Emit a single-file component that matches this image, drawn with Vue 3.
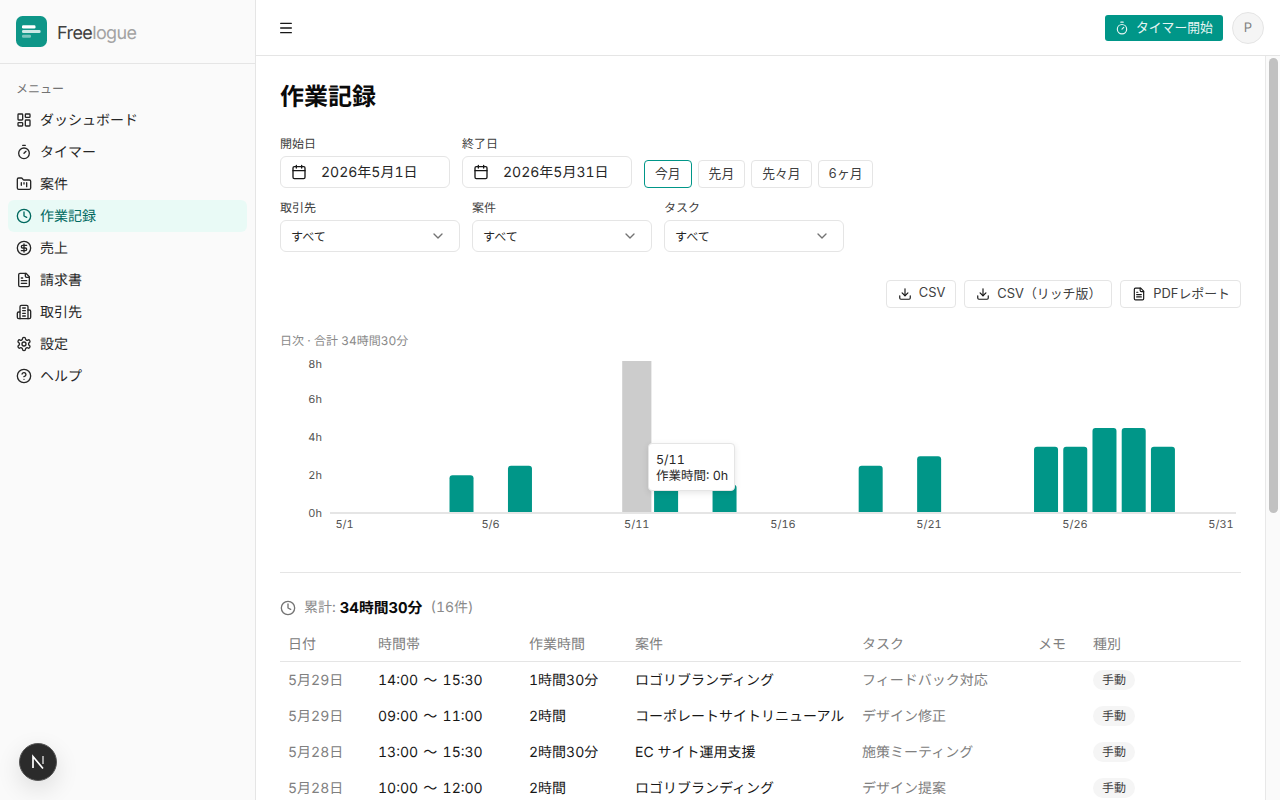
<script setup>
const nav = [
  { label: 'ダッシュボード', icon: 'dash' },
  { label: 'タイマー', icon: 'timer' },
  { label: '案件', icon: 'folder' },
  { label: '作業記録', icon: 'clock', active: true },
  { label: '売上', icon: 'dollar' },
  { label: '請求書', icon: 'file' },
  { label: '取引先', icon: 'building' },
  { label: '設定', icon: 'gear' },
  { label: 'ヘルプ', icon: 'help' },
]
const ranges = ['今月', '先月', '先々月', '6ヶ月']
const selects = ['取引先', '案件', 'タスク']
const exportsList = [
  { label: 'CSV', icon: 'download' },
  { label: 'CSV（リッチ版）', icon: 'download' },
  { label: 'PDFレポート', icon: 'file' },
]
const slot = 906 / 31
const zeroY = 513
const perHour = 18.9
const hours = { 4: 2, 6: 2.5, 11: 3.5, 13: 1.5, 18: 2.5, 20: 3, 24: 3.5, 25: 3.5, 26: 4.5, 27: 4.5, 28: 3.5 }
const bars = Object.entries(hours).map(([i, h]) => ({
  x: 330 - 280 + slot * (Number(i) + 0.5) - 12,
  h: h * perHour,
}))
const barPath = (b) => {
  const top = zeroY - 356 - b.h
  const base = zeroY - 356
  return `M${b.x} ${base}V${top + 3}Q${b.x} ${top} ${b.x + 3} ${top}H${b.x + 21}Q${b.x + 24} ${top} ${b.x + 24} ${top + 3}V${base}Z`
}
const yTicks = [['8h', 8], ['6h', 43], ['4h', 81], ['2h', 119], ['0h', 157]]
const xTicks = [['5/1', 64.5], ['5/6', 210.5], ['5/11', 356.8], ['5/16', 503], ['5/21', 649], ['5/26', 795], ['5/31', 941]]
const rows = [
  ['5月29日', '14:00 〜 15:30', '1時間30分', 'ロゴリブランディング', 'フィードバック対応'],
  ['5月29日', '09:00 〜 11:00', '2時間', 'コーポレートサイトリニューアル', 'デザイン修正'],
  ['5月28日', '13:00 〜 15:30', '2時間30分', 'EC サイト運用支援', '施策ミーティング'],
  ['5月28日', '10:00 〜 12:00', '2時間', 'ロゴリブランディング', 'デザイン提案'],
]
</script>

<template>
  <div class="app">
    <aside class="sidebar">
      <div class="brand">
        <svg class="logo" viewBox="0 0 31 31" width="31" height="31">
          <rect width="31" height="31" rx="6.5" fill="#0e9688" />
          <rect x="6" y="9.3" width="13.5" height="3.2" rx="1.2" fill="#fff" />
          <rect x="6" y="14" width="18.6" height="3" rx="1.2" fill="#fff" fill-opacity=".78" />
          <rect x="6" y="18.7" width="9" height="3" rx="1.2" fill="#fff" fill-opacity=".45" />
        </svg>
        <span class="brand-name">Free<span class="brand-light">logue</span></span>
      </div>
      <nav class="nav">
        <div class="nav-title">メニュー</div>
        <a v-for="n in nav" :key="n.label" class="nav-item" :class="{ active: n.active }">
          <svg class="ico" viewBox="0 0 24 24" width="16" height="16">
            <g v-if="n.icon === 'dash'"><rect x="3" y="3" width="7" height="9" rx="1" /><rect x="14" y="3" width="7" height="5" rx="1" /><rect x="14" y="12" width="7" height="9" rx="1" /><rect x="3" y="16" width="7" height="5" rx="1" /></g>
            <g v-else-if="n.icon === 'timer'"><line x1="10" y1="2" x2="14" y2="2" /><line x1="12" y1="14" x2="15" y2="11" /><circle cx="12" cy="14" r="8" /></g>
            <g v-else-if="n.icon === 'folder'"><path d="M20 20a2 2 0 0 0 2-2V8a2 2 0 0 0-2-2h-7.9a2 2 0 0 1-1.69-.9L9.6 3.9A2 2 0 0 0 7.93 3H4a2 2 0 0 0-2 2v13a2 2 0 0 0 2 2Z" /><path d="M8 10v4M12 10v2M16 10v6" /></g>
            <g v-else-if="n.icon === 'clock'"><circle cx="12" cy="12" r="10" /><path d="M12 6v6l4 2" /></g>
            <g v-else-if="n.icon === 'dollar'"><circle cx="12" cy="12" r="10" /><path d="M16 8h-6a2 2 0 1 0 0 4h4a2 2 0 1 1 0 4H8" /><path d="M12 18V6" /></g>
            <g v-else-if="n.icon === 'file'"><path d="M15 2H6a2 2 0 0 0-2 2v16a2 2 0 0 0 2 2h12a2 2 0 0 0 2-2V7Z" /><path d="M14 2v4a2 2 0 0 0 2 2h4" /><path d="M10 9H8M16 13H8M16 17H8" /></g>
            <g v-else-if="n.icon === 'building'"><path d="M6 22V4a2 2 0 0 1 2-2h8a2 2 0 0 1 2 2v18Z" /><path d="M6 12H4a2 2 0 0 0-2 2v6a2 2 0 0 0 2 2h2" /><path d="M18 9h2a2 2 0 0 1 2 2v9a2 2 0 0 1-2 2h-2" /><path d="M10 6h4M10 10h4M10 14h4M10 18h4" /></g>
            <g v-else-if="n.icon === 'gear'"><path d="M12.22 2h-.44a2 2 0 0 0-2 2v.18a2 2 0 0 1-1 1.73l-.43.25a2 2 0 0 1-2 0l-.15-.08a2 2 0 0 0-2.73.73l-.22.38a2 2 0 0 0 .73 2.73l.15.1a2 2 0 0 1 1 1.72v.51a2 2 0 0 1-1 1.74l-.15.09a2 2 0 0 0-.73 2.73l.22.38a2 2 0 0 0 2.73.73l.15-.08a2 2 0 0 1 2 0l.43.25a2 2 0 0 1 1 1.73V20a2 2 0 0 0 2 2h.44a2 2 0 0 0 2-2v-.18a2 2 0 0 1 1-1.73l.43-.25a2 2 0 0 1 2 0l.15.08a2 2 0 0 0 2.73-.73l.22-.39a2 2 0 0 0-.73-2.73l-.15-.08a2 2 0 0 1-1-1.74v-.5a2 2 0 0 1 1-1.74l.15-.09a2 2 0 0 0 .73-2.73l-.22-.38a2 2 0 0 0-2.73-.73l-.15.08a2 2 0 0 1-2 0l-.43-.25a2 2 0 0 1-1-1.73V4a2 2 0 0 0-2-2Z" /><circle cx="12" cy="12" r="3" /></g>
            <g v-else-if="n.icon === 'help'"><circle cx="12" cy="12" r="10" /><path d="M9.09 9a3 3 0 0 1 5.83 1c0 2-3 3-3 3" /><path d="M12 17h.01" /></g>
          </svg>
          <span>{{ n.label }}</span>
        </a>
      </nav>
      <div class="next-badge">
        <svg viewBox="0 0 38 38" width="38" height="38">
          <circle cx="19" cy="19" r="18.5" fill="#2b2b2b" stroke="#555" />
          <path d="M14 25V13.5L24 25.5" fill="none" stroke="#fff" stroke-width="1.7" />
          <path d="M24 13V21" fill="none" stroke="#bbb" stroke-width="1.7" />
        </svg>
      </div>
    </aside>

    <div class="main">
      <header class="topbar">
        <svg class="ico menu" viewBox="0 0 24 24" width="16" height="16"><path d="M4 5h16M4 12h16M4 19h16" /></svg>
        <div class="top-right">
          <button class="timer-btn">
            <svg class="ico" viewBox="0 0 24 24" width="14" height="14"><line x1="10" y1="2" x2="14" y2="2" /><line x1="12" y1="14" x2="15" y2="11" /><circle cx="12" cy="14" r="8" /></svg>
            タイマー開始
          </button>
          <div class="avatar">P</div>
        </div>
      </header>

      <div class="body">
        <main class="content">
          <h1 class="title">作業記録</h1>

          <div class="filters">
            <div class="filter-row">
              <label class="field">
                <span class="field-label">開始日</span>
                <div class="input date"><svg class="ico" viewBox="0 0 24 24" width="16" height="16"><path d="M8 2v4M16 2v4" /><rect x="3" y="4" width="18" height="18" rx="2" /><path d="M3 10h18" /></svg><span>2026年5月1日</span></div>
              </label>
              <label class="field">
                <span class="field-label">終了日</span>
                <div class="input date"><svg class="ico" viewBox="0 0 24 24" width="16" height="16"><path d="M8 2v4M16 2v4" /><rect x="3" y="4" width="18" height="18" rx="2" /><path d="M3 10h18" /></svg><span>2026年5月31日</span></div>
              </label>
              <div class="ranges">
                <button v-for="(r, i) in ranges" :key="r" class="range" :class="{ on: i === 0 }">{{ r }}</button>
              </div>
            </div>
            <div class="filter-row">
              <label v-for="s in selects" :key="s" class="field">
                <span class="field-label">{{ s }}</span>
                <div class="input select"><span>すべて</span><svg class="ico chev" viewBox="0 0 24 24" width="16" height="16"><path d="m6 9 6 6 6-6" /></svg></div>
              </label>
            </div>
          </div>

          <div class="exports">
            <button v-for="e in exportsList" :key="e.label" class="export">
              <svg class="ico" viewBox="0 0 24 24" width="14" height="14">
                <g v-if="e.icon === 'download'"><path d="M12 15V3" /><path d="M21 15v4a2 2 0 0 1-2 2H5a2 2 0 0 1-2-2v-4" /><path d="m7 10 5 5 5-5" /></g>
                <g v-else><path d="M15 2H6a2 2 0 0 0-2 2v16a2 2 0 0 0 2 2h12a2 2 0 0 0 2-2V7Z" /><path d="M14 2v4a2 2 0 0 0 2 2h4" /><path d="M10 9H8M16 13H8M16 17H8" /></g>
              </svg>
              {{ e.label }}
            </button>
          </div>

          <div class="chart-title">日次 · 合計 34時間30分</div>
          <div class="chart">
            <svg class="chart-svg" viewBox="0 0 961 180" width="961" height="180">
              <rect x="342.2" y="5" width="29.2" height="152" fill="#ccc" />
              <path v-for="(b, i) in bars" :key="i" :d="barPath(b)" fill="#009688" />
              <line x1="50" y1="157" x2="956" y2="157" stroke="#e5e5e5" stroke-width="2" />
              <text v-for="t in yTicks" :key="t[0]" x="42" :y="t[1] + 4" text-anchor="end" class="tick">{{ t[0] }}</text>
              <text v-for="t in xTicks" :key="t[0]" :x="t[1]" y="172" text-anchor="middle" class="tick">{{ t[0] }}</text>
            </svg>
            <div class="tooltip">
              <div>5/11</div>
              <div>作業時間: 0h</div>
            </div>
          </div>

          <hr class="sep" />

          <div class="summary">
            <svg class="ico" viewBox="0 0 24 24" width="16" height="16"><circle cx="12" cy="12" r="10" /><path d="M12 6v6l4 2" /></svg>
            <span class="sum-label">累計:</span>
            <strong>34時間30分</strong>
            <span class="sum-count">(16件)</span>
          </div>

          <table class="table">
            <thead>
              <tr>
                <th class="c1">日付</th><th class="c2">時間帯</th><th class="c3">作業時間</th><th class="c4">案件</th><th class="c5">タスク</th><th class="c6">メモ</th><th class="c7">種別</th>
              </tr>
            </thead>
            <tbody>
              <tr v-for="(r, i) in rows" :key="i">
                <td class="muted">{{ r[0] }}</td>
                <td class="time">{{ r[1] }}</td>
                <td>{{ r[2] }}</td>
                <td>{{ r[3] }}</td>
                <td class="muted">{{ r[4] }}</td>
                <td></td>
                <td><span class="tag">手動</span></td>
              </tr>
            </tbody>
          </table>
        </main>
        <div class="scrollbar"><div class="thumb"></div></div>
      </div>
    </div>
  </div>
</template>

<style>
html, body { margin: 0; height: 100%; overflow: hidden; }
</style>

<style scoped>
.app {
  display: flex; width: 1280px; height: 800px; overflow: hidden; background: #fff; color: #0a0a0a;
  font-family: Inter, "Noto Sans CJK JP", sans-serif; font-size: 14px;
  font-variant-numeric: tabular-nums;
  text-rendering: geometricPrecision;
}
.ico { fill: none; stroke: currentColor; stroke-width: 2; stroke-linecap: round; stroke-linejoin: round; flex: none; }
.sidebar { position: relative; width: 256px; flex: none; box-sizing: border-box; background: #fafafa; border-right: 1px solid #e5e5e5; }
.brand { display: flex; align-items: center; gap: 10px; height: 64px; box-sizing: border-box; padding: 0 16px; border-bottom: 1px solid #e5e5e5; }
.brand-name { font-size: 18px; letter-spacing: -0.6px; color: #404040; padding-top: 3px; }
.brand-light { color: #a3a3a3; }
.nav { padding: 8px; }
.nav-title { height: 32px; padding: 1px 8px 0; box-sizing: border-box; line-height: 32px; font-size: 12px; color: #737373; }
.nav-item { display: flex; align-items: center; gap: 8px; height: 32px; padding: 0 8px; border-radius: 6px; color: #262626; }
.nav-item.active { background: #e9faf6; color: #00695f; }
.next-badge { position: absolute; left: 19px; top: 743px; width: 38px; height: 38px; border-radius: 50%; box-shadow: 0 8px 24px rgba(0,0,0,.12); }
.next-badge svg { display: block; }
.main { flex: 1; min-width: 0; display: flex; flex-direction: column; }
.topbar { height: 56px; flex: none; box-sizing: border-box; display: flex; align-items: center; justify-content: space-between; padding: 0 16px 0 22px; border-bottom: 1px solid #e5e5e5; }
.menu { color: #171717; }
.top-right { display: flex; align-items: center; gap: 9px; }
.timer-btn { display: flex; align-items: center; gap: 7px; height: 26px; width: 118px; box-sizing: border-box; padding: 0 0 2px 10px; border: 0; border-radius: 3px; background: #009688; color: #e6f5f3; font: inherit; font-size: 12.8px; }
.timer-btn .ico { margin-top: 2px; }
.avatar { width: 32px; height: 32px; box-sizing: border-box; border-radius: 50%; background: #f5f5f5; border: 1px solid #e5e5e5; color: #808080; display: flex; align-items: center; justify-content: center; font-size: 13px; }
.body { flex: 1; min-height: 0; display: flex; }
.content { flex: 1; min-width: 0; overflow: hidden; padding: 24px; box-sizing: border-box; }
.scrollbar { position: relative; width: 15px; flex: none; box-sizing: border-box; background: #fafafa; border-left: 1px solid #e8e8e8; }
.thumb { position: absolute; left: 3px; top: 2px; width: 9px; height: 455px; border-radius: 5px; background: #c1c1c1; }
.title { margin: 0; padding-top: 1px; font-size: 24px; line-height: 32px; font-weight: 700; color: #0a0a0a; }
.filters { margin-top: 23px; display: flex; flex-direction: column; gap: 12px; }
.filter-row { display: flex; align-items: flex-end; gap: 12px; }
.field { display: flex; flex-direction: column; gap: 3.5px; }
.field-label { font-size: 12px; line-height: 16.5px; color: #404040; }
.input { box-sizing: border-box; height: 32px; background: #fff; border: 1px solid #e5e5e5; border-radius: 6px; display: flex; align-items: center; font-size: 12px; }
.date { width: 170px; padding-left: 10px; gap: 14px; font-size: 14px; color: #262626; }
.date .ico { color: #171717; }
.select { width: 180px; padding: 0 13px 0 10px; justify-content: space-between; color: #262626; }
.chev { color: #737373; }
.ranges { display: flex; gap: 6px; }
.range { height: 28px; padding: 0 10px 3px; box-sizing: border-box; background: #fff; border: 1px solid #e5e5e5; border-radius: 4px; font: inherit; font-size: 12.8px; color: #404040; }
.range.on { border-color: #009688; }
.exports { margin-top: 28px; display: flex; justify-content: flex-end; gap: 8px; }
.export { display: flex; align-items: center; gap: 7px; height: 28px; padding: 0 10px 3px 11px; box-sizing: border-box; background: #fff; border: 1px solid #e5e5e5; border-radius: 4px; font: inherit; font-size: 12.9px; color: #404040; }
.export .ico { color: #171717; margin-top: 3px; }
.chart-title { margin-top: 24px; padding-top: 1px; font-size: 12px; line-height: 16px; color: #8a8a8a; }
.chart { position: relative; height: 180px; margin-top: 7px; }
.chart-svg { display: block; width: 961px; height: 180px; }
.tick { font-size: 11px; fill: #525252; font-family: Inter, "Noto Sans CJK JP", sans-serif; }
.tooltip { position: absolute; left: 368px; top: 87px; box-sizing: border-box; width: 87px; height: 48px; padding: 9px 7px 0; background: #fff; border: 1px solid #e5e5e5; border-radius: 4px; box-shadow: 0 2px 6px rgba(0,0,0,.1); font-size: 12.5px; line-height: 16px; color: #262626; white-space: nowrap; }
.sep { margin: 36px 0 0; border: 0; border-top: 1px solid #e5e5e5; }
.summary { margin-top: 25px; display: flex; align-items: center; font-size: 14px; line-height: 20px; color: #737373; }
.summary .ico { margin-right: 8px; color: #737373; }
.sum-label { margin-right: 4px; color: #8a8a8a; }
.summary strong { color: #0a0a0a; font-weight: 700; font-size: 14.8px; margin-right: 8px; }
.sum-count { color: #8a8a8a; }
.table { margin-top: 7px; width: 961px; border-collapse: collapse; table-layout: fixed; font-size: 14px; }
th { box-sizing: border-box; height: 36px; padding: 3px 8px 0; font-weight: 400; text-align: left; color: #808080; border-bottom: 1px solid #e5e5e5; white-space: nowrap; }
.c1 { width: 90px; }
.c2 { width: 151px; }
.c3 { width: 106px; }
.c4 { width: 227px; }
.c5 { width: 176px; }
.c6 { width: 55px; }
td { box-sizing: border-box; height: 36px; padding: 2px 8px 0; color: #171717; white-space: nowrap; }
td.time { word-spacing: 1.5px; }
td.muted { color: #808080; }
.tag { display: inline-block; vertical-align: middle; padding: 0 9px; line-height: 20px; border-radius: 10px; background: #f5f5f5; font-size: 12px; color: #404040; }
</style>
